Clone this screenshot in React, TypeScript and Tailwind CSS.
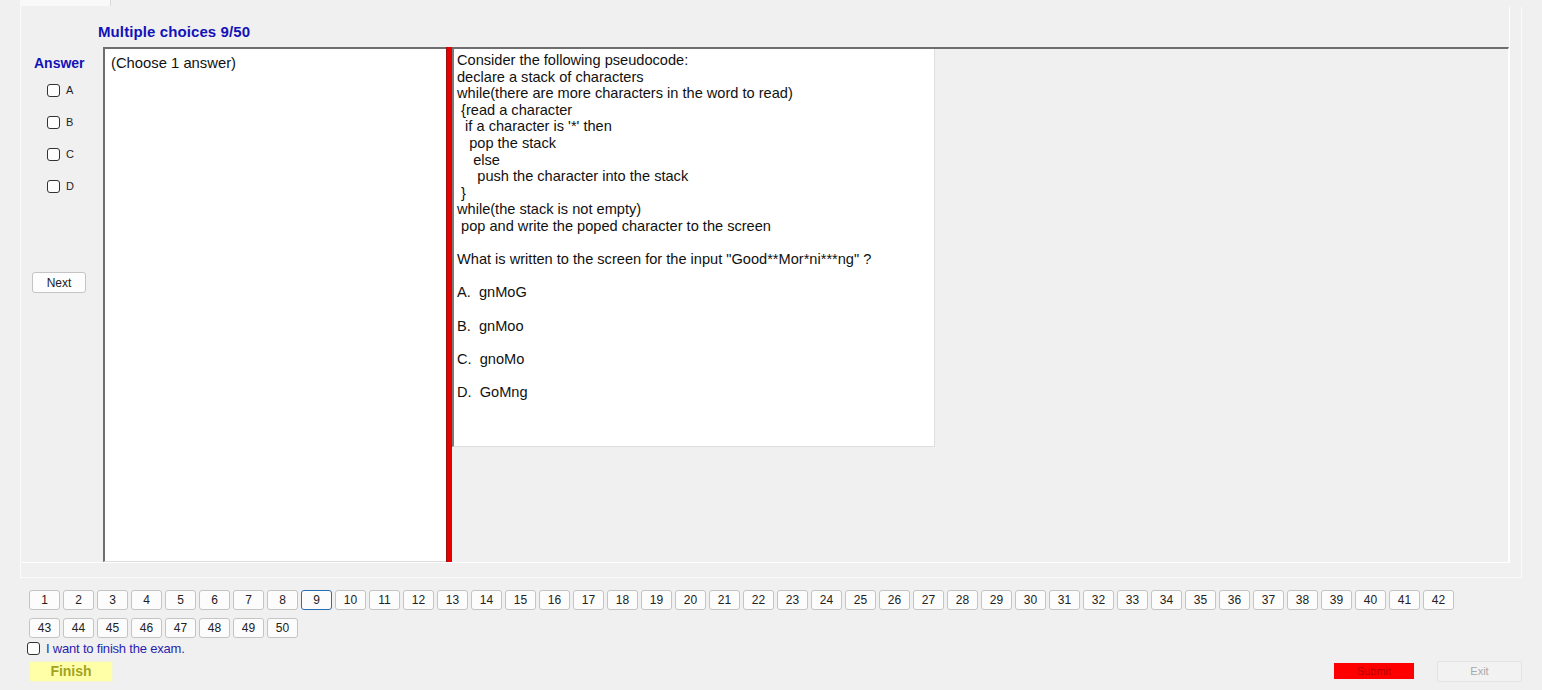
import React from "react";

const questionText = `Consider the following pseudocode:
declare a stack of characters
while(there are more characters in the word to read)
 {read a character
  if a character is '*' then
   pop the stack
    else
     push the character into the stack
 }
while(the stack is not empty)
 pop and write the poped character to the screen

What is written to the screen for the input "Good**Mor*ni***ng" ?

A.  gnMoG

B.  gnMoo

C.  gnoMo

D.  GoMng`;

const Box: React.FC = () => (
  <span className="inline-block w-[13px] h-[13px] bg-white border border-[#333] rounded-[3px]" />
);

const NumButton: React.FC<{ n: number; active?: boolean }> = ({ n, active }) => (
  <button
    className={
      "w-[31px] h-[20px] flex items-center justify-center text-[12px] text-[#222] rounded-[3px] bg-[#fcfcfc] border " +
      (active ? "border-[#2a6db3]" : "border-[#c4c4c4]")
    }
  >
    {n}
  </button>
);

export default function App() {
  const row1 = Array.from({ length: 42 }, (_, i) => i + 1);
  const row2 = Array.from({ length: 8 }, (_, i) => i + 43);

  return (
    <div className="w-[1542px] h-[690px] bg-[#f0f0f0] overflow-hidden font-['Liberation_Sans',Arial,sans-serif]">
      {/* tab strip */}
      <div className="h-[6px] flex pl-[20px]">
        <div className="w-[91px] bg-[#f9f9f9] border-r border-[#d9d9d9]" />
      </div>

      {/* tab page */}
      <div className="ml-[20px] w-[1502px] h-[571px] border border-[#fbfbfb] border-t-0">
        <div className="ml-[1px] mt-[1px] w-[1488px] h-[556px] border-r border-b border-white flex flex-col">
          {/* title */}
          <div className="h-[40px] flex items-center pl-[76px] pt-[10px]">
            <span className="text-[15px] font-bold text-[#1212b8] tracking-[0.1px]">Multiple choices 9/50</span>
          </div>

          <div className="flex flex-1">
            {/* answers column */}
            <div className="w-[81px] flex flex-col">
              <span className="mt-[7px] ml-[12px] text-[14px] font-bold text-[#1212b8] leading-[18px]">Answer</span>
              <div className="ml-[25px] mt-[12px] flex flex-col gap-[19px]">
                {["A", "B", "C", "D"].map((l) => (
                  <label key={l} className="flex items-center gap-[6px] h-[13px] text-[11px] text-[#222]">
                    <Box />
                    <span>{l}</span>
                  </label>
                ))}
              </div>
              <button className="ml-[10px] mt-[79px] w-[54px] h-[21px] bg-[#fdfdfd] border border-[#c4c4c4] rounded-[3px] text-[12px] text-[#222] flex items-center justify-center">
                Next
              </button>
            </div>

            {/* left text box */}
            <div className="w-[343px] bg-white border-t-2 border-l-2 border-[#6e6e6e] border-b border-b-[#dcdcdc] px-[6px] pt-[2px]">
              <span className="text-[14.8px] leading-[17px] text-[#111]">(Choose 1 answer)</span>
            </div>

            {/* splitter */}
            <div className="w-[6px] bg-[#e60000] border-l border-[#9a1010]" />

            {/* right panel */}
            <div className="flex-1 border-t-2 border-[#6e6e6e] border-r border-r-white">
              <div className="w-[483px] h-[398px] bg-white border-l-2 border-[#7a7a7a] border-r border-r-[#dedede] border-b border-b-[#dedede] pl-[3px] pt-[3px]">
                <pre className="font-['Liberation_Sans',Arial,sans-serif] text-[14.6px] leading-[16.6px] text-[#111] whitespace-pre">
                  {questionText}
                </pre>
              </div>
            </div>
          </div>
        </div>
      </div>

      {/* question navigator */}
      <div className="pl-[29px] pt-[12px] flex flex-col gap-[8px]">
        <div className="flex gap-[3px]">
          {row1.map((n) => (
            <NumButton key={n} n={n} active={n === 9} />
          ))}
        </div>
        <div className="flex gap-[3px]">
          {row2.map((n) => (
            <NumButton key={n} n={n} />
          ))}
        </div>
      </div>

      <label className="ml-[27px] mt-[3px] flex items-center gap-[6px] h-[15px]">
        <Box />
        <span className="text-[13px] text-[#2a1fae] tracking-[-0.2px]">I want to finish the exam.</span>
      </label>

      <div className="flex items-center mt-[4px] h-[22px]">
        <button className="ml-[29px] w-[84px] h-[21px] bg-[#ffffa8] border border-[#f4f4d8] rounded-[2px] text-[14px] font-bold text-[#a3a31f] flex items-center justify-center">
          Finish
        </button>
        <div className="flex-1" />
        <button className="w-[80px] h-[16px] bg-[#ff0000] text-[11px] text-[#b30000] flex items-center justify-center">
          Submit
        </button>
        <button className="ml-[23px] mr-[20px] w-[85px] h-[21px] bg-[#f2f2f2] border border-[#e3e3e3] rounded-[2px] text-[11px] text-[#a8a8a8] flex items-center justify-center">
          Exit
        </button>
      </div>
    </div>
  );
}
